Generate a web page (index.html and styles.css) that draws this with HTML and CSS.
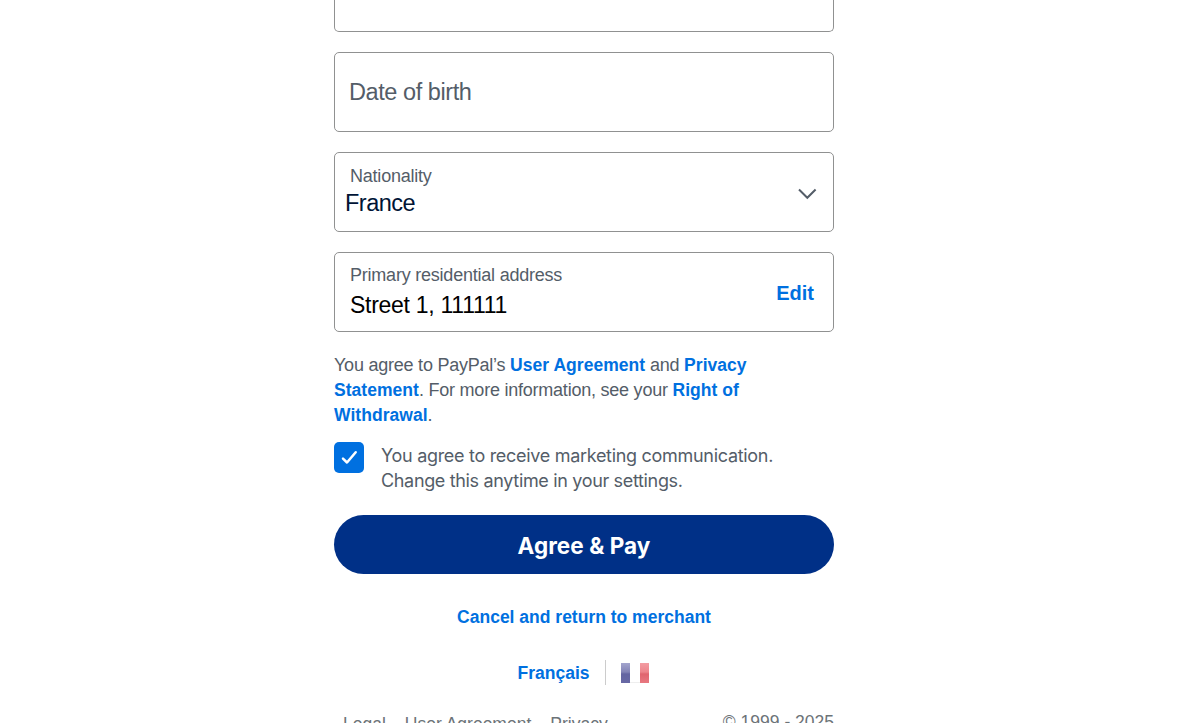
FILE: index.html
```html
<!DOCTYPE html>
<html lang="en">
<head>
<meta charset="utf-8">
<title>Checkout</title>
<link rel="stylesheet" href="styles.css">
</head>
<body>
<main class="checkout">
  <div class="field field-partial"></div>
  <div class="field field-birth"><span class="placeholder">Date of birth</span></div>
  <div class="field field-select">
    <div class="field-body">
      <span class="label">Nationality</span>
      <span class="value value-select">France</span>
    </div>
    <svg class="chevron" width="20" height="14" viewBox="0 0 20 14"><path d="M2 2.5 10.3 10.8 18.6 2.5" fill="none" stroke="#545d68" stroke-width="2"/></svg>
  </div>
  <div class="field field-address">
    <div class="field-body">
      <span class="label">Primary residential address</span>
      <span class="value value-address">Street 1, 111111</span>
    </div>
    <a class="link edit">Edit</a>
  </div>
  <p class="terms"><span class="line">You agree to PayPal’s <a class="link">User Agreement</a> and <a class="link">Privacy</a></span> <span class="line"><a class="link">Statement</a>. For more information, see your <a class="link">Right of</a></span> <span class="line"><a class="link">Withdrawal</a>.</span></p>
  <div class="consent">
    <span class="checkbox"><svg width="30" height="31" viewBox="0 0 30 31"><path d="M9 16.6 13 20.5 21.7 10.2" fill="none" stroke="#fff" stroke-width="2.5" stroke-linecap="round" stroke-linejoin="round"/></svg></span>
    <p class="consent-text"><span class="line">You agree to receive marketing communication.</span> <span class="line consent-second">Change this anytime in your settings.</span></p>
  </div>
  <button class="pay"><span class="pay-label">Agree &amp; Pay</span></button>
  <a class="link cancel">Cancel and return to merchant</a>
  <div class="locale">
    <a class="link language">Français</a>
    <span class="divider"></span>
    <span class="flag"><span class="band blue"></span><span class="band white"></span><span class="band red"></span></span>
  </div>
  <footer class="footer">
    <nav class="footer-links"><a>Legal</a><a>User Agreement</a><a>Privacy</a></nav>
    <span class="copyright">© 1999 - 2025</span>
  </footer>
</main>
</body>
</html>
```
FILE: styles.css
```css
* { box-sizing: border-box; }
body {
  margin: 0;
  height: 723px;
  overflow: hidden;
  background: #fff;
  font: 17.5px/25px "Liberation Sans", Arial, sans-serif;
  color: #545d68;
}
.checkout {
  width: 500px;
  margin-left: 334px;
  display: flex;
  flex-direction: column;
}
.field {
  height: 80px;
  margin-bottom: 20px;
  border: 1px solid #909191;
  border-radius: 5px;
  display: flex;
  justify-content: space-between;
  flex-shrink: 0;
}
.field-partial { height: 32px; border-top: 0; border-radius: 0 0 5px 5px; }
.field-birth { align-items: center; padding-left: 14px; }
.placeholder { font-size: 23.5px; line-height: 28px; letter-spacing: -.43px; }
.field-body { display: flex; flex-direction: column; padding: 11px 0 0 15px; }
.label { font-size: 18px; line-height: 25px; letter-spacing: -.22px; }
.value { font-size: 23.5px; line-height: 28px; letter-spacing: -.5px; color: #000; margin-top: 3px; }
.value-select { color: #001435; margin: 0 0 0 -5px; }
.value-address { font-size: 23px; letter-spacing: -.28px; }
.field-address .field-body { padding-top: 10px; }
.chevron { margin: 34px 16px 0 0; }
.link { color: #0070e0; font-weight: 700; }
.edit { font-size: 20px; line-height: 28px; margin: 26px 19px 0 0; }
.terms { margin: 1px 0 0; height: 75px; font-size: 18px; letter-spacing: -.23px; }
.terms .link { font-size: 17.5px; letter-spacing: .04px; }
.line { display: block; white-space: nowrap; }
.consent { display: flex; gap: 17px; margin-top: 14px; height: 73px; }
.checkbox { width: 30px; height: 31px; border-radius: 5px; background: #0070e0; }
.checkbox svg { display: block; }
.consent-text { margin: 1px 0 0; font-family: Inter, sans-serif; font-size: 18px; letter-spacing: -.3px; }
.consent-second { letter-spacing: -.34px; }
.pay {
  height: 59px;
  border: 0;
  padding: 3px 0 0;
  border-radius: 30px;
  background: #003087;
  color: #fff;
  font: 700 22.5px/28px Inter, sans-serif;
  letter-spacing: .05px;
}
.cancel { align-self: center; margin-top: 31px; }
.locale { display: flex; align-items: center; margin: 30px 0 0 183.5px; height: 25px; }
.language { padding-top: 2px; }
.divider { width: 1px; height: 25px; margin: 0 15px 0 16px; background: #ccc; }
.flag { display: flex; width: 28px; height: 20px; }
.band { width: 9px; }
.blue { background: linear-gradient(#a3a5cd, #8283b6 45%, #6364a1 55%, #6869a5); }
.white { width: 10px; border-bottom: 1px solid #eee; }
.red { background: linear-gradient(#f39ca2, #ed858c 45%, #e0656f 55%, #e87880); }
.footer { display: flex; justify-content: space-between; margin-top: 24px; color: #6c7378; }
.footer-links { display: flex; gap: 19px; padding: 3px 0 0 9px; }
.copyright { padding-top: 1px; }
```
